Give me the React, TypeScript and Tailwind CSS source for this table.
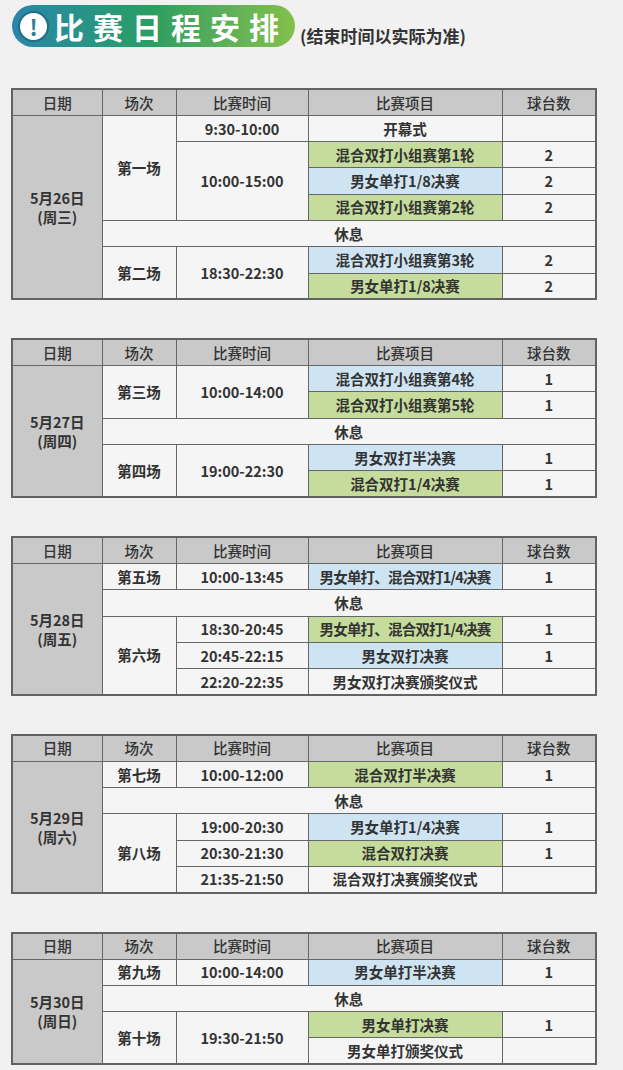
import React from 'react'

type Fill = 'g' | 'b' | null

type Row =
  | { rest: true }
  | {
      rest?: false
      session?: { label: string; span: number }
      time?: { label: string; span: number }
      item: string
      fill: Fill
      count: string
    }

type Day = { date: string; week: string; rows: Row[] }

const days: Day[] = [
  {
    date: '5月26日',
    week: '(周三)',
    rows: [
      { session: { label: '第一场', span: 4 }, time: { label: '9:30-10:00', span: 1 }, item: '开幕式', fill: null, count: '' },
      { time: { label: '10:00-15:00', span: 3 }, item: '混合双打小组赛第1轮', fill: 'g', count: '2' },
      { item: '男女单打1/8决赛', fill: 'b', count: '2' },
      { item: '混合双打小组赛第2轮', fill: 'g', count: '2' },
      { rest: true },
      { session: { label: '第二场', span: 2 }, time: { label: '18:30-22:30', span: 2 }, item: '混合双打小组赛第3轮', fill: 'b', count: '2' },
      { item: '男女单打1/8决赛', fill: 'g', count: '2' },
    ],
  },
  {
    date: '5月27日',
    week: '(周四)',
    rows: [
      { session: { label: '第三场', span: 2 }, time: { label: '10:00-14:00', span: 2 }, item: '混合双打小组赛第4轮', fill: 'b', count: '1' },
      { item: '混合双打小组赛第5轮', fill: 'g', count: '1' },
      { rest: true },
      { session: { label: '第四场', span: 2 }, time: { label: '19:00-22:30', span: 2 }, item: '男女双打半决赛', fill: 'b', count: '1' },
      { item: '混合双打1/4决赛', fill: 'g', count: '1' },
    ],
  },
  {
    date: '5月28日',
    week: '(周五)',
    rows: [
      { session: { label: '第五场', span: 1 }, time: { label: '10:00-13:45', span: 1 }, item: '男女单打、混合双打1/4决赛', fill: 'b', count: '1' },
      { rest: true },
      { session: { label: '第六场', span: 3 }, time: { label: '18:30-20:45', span: 1 }, item: '男女单打、混合双打1/4决赛', fill: 'g', count: '1' },
      { time: { label: '20:45-22:15', span: 1 }, item: '男女双打决赛', fill: 'b', count: '1' },
      { time: { label: '22:20-22:35', span: 1 }, item: '男女双打决赛颁奖仪式', fill: null, count: '' },
    ],
  },
  {
    date: '5月29日',
    week: '(周六)',
    rows: [
      { session: { label: '第七场', span: 1 }, time: { label: '10:00-12:00', span: 1 }, item: '混合双打半决赛', fill: 'g', count: '1' },
      { rest: true },
      { session: { label: '第八场', span: 3 }, time: { label: '19:00-20:30', span: 1 }, item: '男女单打1/4决赛', fill: 'b', count: '1' },
      { time: { label: '20:30-21:30', span: 1 }, item: '混合双打决赛', fill: 'g', count: '1' },
      { time: { label: '21:35-21:50', span: 1 }, item: '混合双打决赛颁奖仪式', fill: null, count: '' },
    ],
  },
  {
    date: '5月30日',
    week: '(周日)',
    rows: [
      { session: { label: '第九场', span: 1 }, time: { label: '10:00-14:00', span: 1 }, item: '男女单打半决赛', fill: 'b', count: '1' },
      { rest: true },
      { session: { label: '第十场', span: 2 }, time: { label: '19:30-21:50', span: 2 }, item: '男女单打决赛', fill: 'g', count: '1' },
      { item: '男女单打颁奖仪式', fill: null, count: '' },
    ],
  },
]

const cell = 'border border-[#666] text-center align-middle p-0 whitespace-nowrap'
const fillClass = (f: Fill) =>
  f === 'g' ? 'bg-[#c5dc9c]' : f === 'b' ? 'bg-[#cfe4f2]' : 'bg-[#f5f5f5]'

function DayTable({ day }: { day: Day }) {
  return (
    <table className="w-[584px] table-fixed border-collapse border-2 border-[#626262] text-[14.5px] font-semibold text-[#333]">
      <colgroup>
        <col className="w-[90px]" />
        <col className="w-[74px]" />
        <col className="w-[132px]" />
        <col className="w-[194px]" />
        <col className="w-[94px]" />
      </colgroup>
      <thead>
        <tr className="h-[26.3px] bg-[#c9c9c9]">
          <th className={`${cell} font-medium`}>日期</th>
          <th className={`${cell} font-medium`}>场次</th>
          <th className={`${cell} font-medium`}>比赛时间</th>
          <th className={`${cell} font-medium`}>比赛项目</th>
          <th className={`${cell} font-medium`}>球台数</th>
        </tr>
      </thead>
      <tbody>
        {day.rows.map((r, i) => (
          <tr key={i} className="h-[26.3px]">
            {i === 0 && (
              <td rowSpan={day.rows.length} className={`${cell} bg-[#c9c9c9] leading-[19px]`}>
                <div>{day.date}</div>
                <div>{day.week}</div>
              </td>
            )}
            {r.rest ? (
              <td colSpan={4} className={`${cell} bg-[#f5f5f5]`}>
                休息
              </td>
            ) : (
              <>
                {r.session && (
                  <td rowSpan={r.session.span} className={`${cell} bg-[#f5f5f5]`}>
                    {r.session.label}
                  </td>
                )}
                {r.time && (
                  <td rowSpan={r.time.span} className={`${cell} bg-[#f5f5f5]`}>
                    {r.time.label}
                  </td>
                )}
                <td className={`${cell} ${fillClass(r.fill)} ${r.item.length > 12 ? 'tracking-[-0.8px]' : ''}`}>
                  {r.item}
                </td>
                <td className={`${cell} bg-[#f5f5f5]`}>{r.count}</td>
              </>
            )}
          </tr>
        ))}
      </tbody>
    </table>
  )
}

export default function App() {
  return (
    <div
      className="min-h-[1070px] w-[623px] bg-[#f1f1f1] pb-4"
      style={{ fontFamily: '"Noto Sans CJK SC", "Noto Sans", sans-serif' }}
    >
      <div className="flex items-end pl-3 pt-[5px]">
        <div className="flex h-[42px] items-center rounded-full bg-gradient-to-r from-[#2c85a9] via-[#2b9e60] to-[#82c04a] pl-[6px] pr-[7px]">
          <div className="flex h-[31px] w-[31px] items-center justify-center rounded-full border-2 border-[#1f6f86] bg-white text-[22px] font-bold leading-none text-[#2a7f95]">
            !
          </div>
          <span className="ml-[5px] text-[30px] font-bold leading-none tracking-[9px] text-white">比赛日程安排</span>
        </div>
        <span className="mb-[3px] ml-[5px] text-[17px] font-bold leading-none text-[#333]">(结束时间以实际为准)</span>
      </div>
      <div className="mt-[41px] flex flex-col gap-[38px] pl-[11px]">
        {days.map((d) => (
          <DayTable key={d.date} day={d} />
        ))}
      </div>
    </div>
  )
}
